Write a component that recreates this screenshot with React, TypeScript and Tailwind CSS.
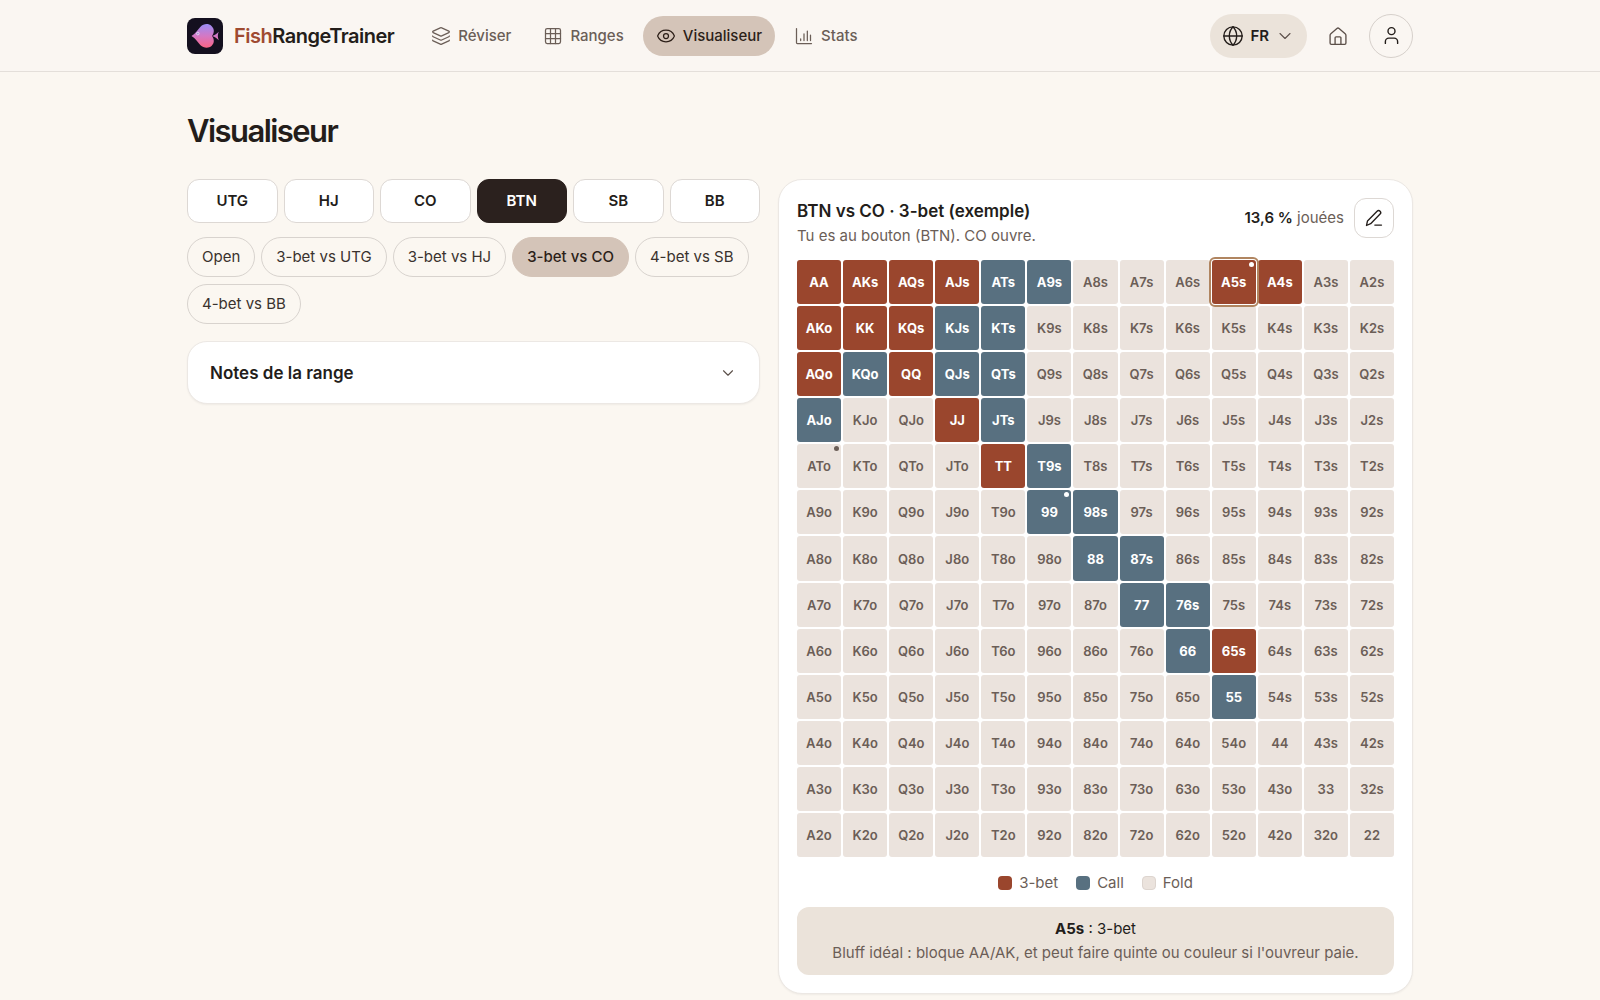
import { useState } from "react";
import { Layers, Grid3x3, Eye, Globe, ChevronDown, User } from "lucide-react";

const RANKS = ["A", "K", "Q", "J", "T", "9", "8", "7", "6", "5", "4", "3", "2"];

const THREE_BET = ["AA", "AKs", "AQs", "AJs", "A5s", "A4s", "AKo", "KK", "KQs", "AQo", "QQ", "JJ", "TT", "65s"];
const CALL = [
  "ATs", "A9s", "KJs", "KTs", "KQo", "QJs", "QTs", "AJo", "JTs", "T9s",
  "99", "98s", "88", "87s", "77", "76s", "66", "55",
];
const WITH_NOTE = ["A5s", "ATo", "99"];

const positions = ["UTG", "HJ", "CO", "BTN", "SB", "BB"];
const spots = ["Open", "3-bet vs UTG", "3-bet vs HJ", "3-bet vs CO", "4-bet vs SB", "4-bet vs BB"];

const legend = [
  { label: "3-bet", swatch: "bg-[#9a462d]" },
  { label: "Call", swatch: "bg-[#587080]" },
  { label: "Fold", swatch: "bg-[#ebe3dd] border border-[#ddd5cf]" },
];

const hands = RANKS.flatMap((row, i) =>
  RANKS.map((col, j) => {
    if (i === j) return row + col;
    return i < j ? `${row}${col}s` : `${col}${row}o`;
  })
);

const handColor = (hand: string) => {
  if (THREE_BET.includes(hand)) return "bg-[#9a462d] font-bold text-white";
  if (CALL.includes(hand)) return "bg-[#587080] font-bold text-white";
  return "bg-[#ebe3dd] font-semibold text-[#6b5e57]";
};

const StatsIcon = () => (
  <svg viewBox="0 0 24 24" className="size-5" fill="none" stroke="currentColor" strokeWidth="1.5" strokeLinecap="round" strokeLinejoin="round" aria-hidden="true">
    <path d="M3 3v17a1 1 0 0 0 1 1h17M8 17.500v-2M12 17.500v-8M16 17.500V6M19.800 17.500V11" />
  </svg>
);

const HomeIcon = () => (
  <svg viewBox="0 0 24 24" className="size-5" fill="none" stroke="currentColor" strokeWidth="1.6" strokeLinecap="round" strokeLinejoin="round" aria-hidden="true">
    <path d="M2.500 11.200a2.500 2.500 0 0 1 .9-1.900l7.300-6.300a2 2 0 0 1 2.600 0l7.300 6.300a2.500 2.500 0 0 1 .9 1.900v9.300a1.500 1.500 0 0 1-1.500 1.500H4a1.500 1.500 0 0 1-1.500-1.500z" />
    <path d="M8.500 22v-7.800a1.200 1.200 0 0 1 1.200-1.200h4.600a1.200 1.200 0 0 1 1.200 1.200V22" />
  </svg>
);

const PenIcon = () => (
  <svg viewBox="0 0 24 24" className="size-5" fill="none" stroke="currentColor" strokeWidth="1.6" strokeLinecap="round" strokeLinejoin="round" aria-hidden="true">
    <path d="M3 21l1.200-5.500L15.700 3.800a2.500 2.500 0 0 1 3.600 0 2.500 2.500 0 0 1 0 3.500L8 18.800zM13 20.500h8" />
  </svg>
);

const Logo = () => (
  <svg viewBox="0 0 36 36" className="size-9" aria-hidden="true">
    <defs>
      <linearGradient id="fish" x1="0" y1="6" x2="0" y2="30" gradientUnits="userSpaceOnUse">
        <stop offset="0" stopColor="#9a8cf5" />
        <stop offset="0.5" stopColor="#d478c4" />
        <stop offset="1" stopColor="#fb6484" />
      </linearGradient>
    </defs>
    <rect width="36" height="36" rx="8" fill="#14101f" />
    <path d="M4.500 18C8.500 15.500 11 11.500 13.500 8.700C16.500 5.500 21.500 5 24.500 8C27.500 11 27.500 14.500 25 18C27.500 21.500 27.500 25 24.500 28C21.500 30.500 16.500 30 13.500 27.300C11 24.500 8.500 20.500 4.500 18z" fill="url(#fish)" />
    <path d="M25 18C28 17.500 30 15.500 31.800 13.800C30.500 16.500 30.500 19.500 31.800 22.200C30 20.500 28 18.500 25 18z" fill="url(#fish)" />
    <circle cx="10.800" cy="15.600" r="1.300" fill="#a88ad8" stroke="#fff" strokeWidth="0.600" />
  </svg>
);

const nav = [
  { label: "Réviser", icon: <Layers size={20} strokeWidth={1.5} /> },
  { label: "Ranges", icon: <Grid3x3 size={20} strokeWidth={1.5} /> },
  { label: "Visualiseur", icon: <Eye size={20} strokeWidth={1.5} /> },
  { label: "Stats", icon: <StatsIcon /> },
];

const Header = () => (
  <header className="border-b border-[#e4dfda] bg-[#faf6f2]">
    <div className="mx-auto flex h-[71px] max-w-[1274px] items-center px-6">
      <a href="#" className="flex items-center gap-[11px] text-xl font-semibold tracking-tight">
        <Logo />
        <span>
          <span className="text-[#9f4a31]">Fish</span>RangeTrainer
        </span>
      </a>
      <nav className="ml-6 flex gap-1.5">
        {nav.map((item) => (
          <a
            key={item.label}
            href="#"
            className={`flex h-10 items-center gap-[7px] rounded-full px-[13px] font-medium ${
              item.label === "Visualiseur" ? "bg-[#d4c4b8] text-[#2c1f18]" : "text-[#6b5e57]"
            }`}
          >
            {item.icon}
            {item.label}
          </a>
        ))}
      </nav>
      <div className="ml-auto flex items-center">
        <button className="flex h-11 items-center gap-1.5 rounded-full bg-[#ebe3da] px-3 font-semibold">
          <Globe size={22} strokeWidth={1.5} />
          FR
          <ChevronDown size={20} strokeWidth={1.3} className="text-[#5c504a]" />
        </button>
        <a href="#" aria-label="Accueil" className="flex size-[62px] items-center justify-center text-[#5c504a]">
          <HomeIcon />
        </a>
        <button aria-label="Compte" className="flex size-11 items-center justify-center rounded-full border border-[#d6d0cb]">
          <User size={21} strokeWidth={1.6} />
        </button>
      </div>
    </div>
  </header>
);

const App = () => {
  const [position, setPosition] = useState("BTN");
  const [spot, setSpot] = useState("3-bet vs CO");
  const [selected, setSelected] = useState("A5s");

  return (
    <div className="min-h-screen bg-[#fbf7f1] font-['Inter',sans-serif] text-[15px] leading-6 text-[#231d1a]">
      <Header />
      <main className="mx-auto max-w-[1274px] px-6 pt-[39px]">
        <h1 className="text-[31px] leading-10 font-semibold tracking-tighter">Visualiseur</h1>
        <div className="mt-7 grid grid-cols-[573fr_635fr] items-start gap-[18px]">
          <div>
            <div className="grid grid-cols-6 gap-1.5">
              {positions.map((p) => (
                <button
                  key={p}
                  onClick={() => setPosition(p)}
                  className={`h-11 rounded-xl border font-semibold ${
                    p === position ? "border-[#2b211e] bg-[#2b211e] text-white" : "border-[#ddd8d4] bg-white"
                  }`}
                >
                  {p}
                </button>
              ))}
            </div>
            <div className="mt-3.5 flex flex-wrap gap-x-1.5 gap-y-[7px]">
              {spots.map((s) => (
                <button
                  key={s}
                  onClick={() => setSpot(s)}
                  className={`h-10 rounded-full border px-3.5 ${
                    s === spot ? "border-[#d4c4b8] bg-[#d4c4b8] font-medium text-[#2c1f18]" : "border-[#d8d3ce] text-[#3a322e]"
                  }`}
                >
                  {s}
                </button>
              ))}
            </div>
            <button className="mt-[17px] flex h-[63px] w-full items-center justify-between rounded-[20px] border border-[#ece8e4] bg-white px-[22px] text-[17px] font-semibold shadow-xs">
              Notes de la range
              <ChevronDown size={18} strokeWidth={1.5} className="text-[#5c504a]" />
            </button>
          </div>

          <section className="rounded-3xl border border-[#ece8e4] bg-white p-[18px] shadow-xs">
            <div className="flex items-start justify-between">
              <div>
                <h2 className="text-[17px] leading-[26px] font-semibold">BTN vs CO · 3-bet (exemple)</h2>
                <p className="text-[#6b5e57]">Tu es au bouton (BTN). CO ouvre.</p>
              </div>
              <div className="flex items-center gap-2.5">
                <p className="text-[#6b5e57]">
                  <strong className="font-semibold text-[#231d1a]">13,6 %</strong> jouées
                </p>
                <button aria-label="Modifier" className="flex size-10 items-center justify-center rounded-xl border border-[#ddd8d4]">
                  <PenIcon />
                </button>
              </div>
            </div>
            <div className="mt-3 grid grid-cols-13 gap-0.5">
              {hands.map((hand) => (
                <button
                  key={hand}
                  onClick={() => setSelected(hand)}
                  className={`relative flex aspect-square items-center justify-center rounded-[3px] text-[13px] ${handColor(hand)} ${
                    hand === selected ? "z-10 shadow-[0_0_0_1px_white] outline-2 outline-offset-1 outline-[#b08560]" : ""
                  }`}
                >
                  {hand}
                  {WITH_NOTE.includes(hand) && <span className="absolute top-0.5 right-0.5 size-[5px] rounded-full bg-current" />}
                </button>
              ))}
            </div>
            <div className="mt-3.5 flex justify-center gap-[18px] text-[#6b5e57]">
              {legend.map((l) => (
                <span key={l.label} className="flex items-center gap-[7px]">
                  <span className={`size-3.5 rounded ${l.swatch}`} />
                  {l.label}
                </span>
              ))}
            </div>
            <div className="mt-3 rounded-xl bg-[#ebe3da] px-4 py-2.5 text-center">
              <p>
                <strong className="font-bold">A5s</strong> : 3-bet
              </p>
              <p className="text-[#6b5e57]">Bluff idéal : bloque AA/AK, et peut faire quinte ou couleur si l'ouvreur paie.</p>
            </div>
          </section>
        </div>
      </main>
    </div>
  );
};

export default App;
